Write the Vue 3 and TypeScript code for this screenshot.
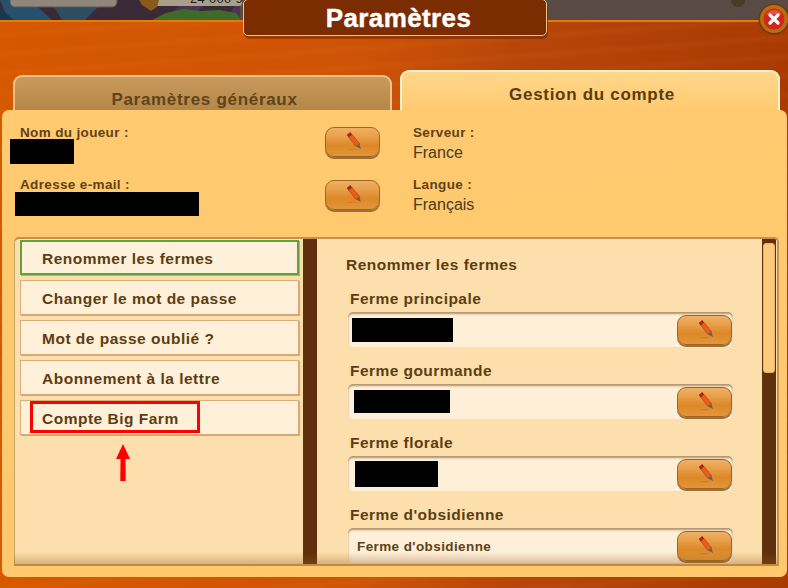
<template>
  <div class="page">
    <div class="backdrop">
      <svg class="scene" width="788" height="20" viewBox="0 0 788 20">
        <rect width="788" height="20" fill="#3a2a38" />
        <path d="M0 0h30l22 20H8z" fill="#27506c" />
        <path d="M0 8l14 12H0z" fill="#173850" />
        <path d="M50 0h55l-20 20H62z" fill="#2f4d62" />
        <path d="M165 20l20-20h24l-20 20zM225 20l14-20h4v20z" fill="#4d3358" />
        <path d="M152 20l14-7 18-4 16 2 20-1 16 3 6 7z" fill="#3f6a2c" />
        <rect x="240" width="548" height="20" fill="#5a4a46" />
        <rect x="10" y="-10" width="107" height="17" rx="5" fill="#8f887a" stroke="#5e574c" />
        <rect x="150" y="-10" width="92" height="16" rx="3" fill="#a9a08c" />
        <path d="M139 0h20l-2 7-6 4-9-6z" fill="#8a5a1c" />
        <circle cx="738" cy="0" r="7" fill="#4a3a22" />
      </svg>
      <span class="scene-count">24 000 92</span>
    </div>

    <div class="wood">
      <div class="tabs">
        <div class="tab tab-off">Paramètres généraux</div>
        <div class="tab tab-on">Gestion du compte</div>
      </div>

      <div class="panel">
        <div class="account">
          <div v-for="row in accountRows" :key="row.label" class="account-row">
            <div class="account-main">
              <div class="caption">{{ row.label }}</div>
              <div class="redacted" :style="{ width: row.maskWidth + 'px', height: row.maskHeight + 'px', marginLeft: row.maskLeft + 'px' }"></div>
            </div>
            <button class="edit-btn" type="button">
              <svg width="55" height="30" viewBox="0 0 55 30">
                <path d="M23 22.500h9" stroke="#f0701c" stroke-width="1" />
                <path d="M27.150 7.400l7.400 9.400-3.500 2.800-7.400-9.400z" fill="#ee5a1a" stroke="#8a3a14" stroke-width=".5" />
                <path d="M25.250 5.100l1.900 2.300-3.500 2.800-1.900-2.300z" fill="#a3261a" />
                <path d="M34.550 16.800l1.350 5.300-4.850-2.500z" fill="#67635a" />
              </svg>
            </button>
            <div class="account-side">
              <div class="caption">{{ row.sideLabel }}</div>
              <div class="side-value">{{ row.sideValue }}</div>
            </div>
          </div>
        </div>

        <div class="sheet">
          <ul class="menu">
            <li v-for="(item, i) in menuItems" :key="item" class="menu-item" :class="{ active: i === 0 }">{{ item }}</li>
          </ul>
          <div class="divider"></div>
          <div class="farms">
            <h2 class="farms-title">Renommer les fermes</h2>
            <div v-for="farm in farms" :key="farm.name" class="farm">
              <div class="farm-label">{{ farm.name }}</div>
              <div class="farm-field">
                <div
                  v-if="farm.maskWidth"
                  class="redacted"
                  :style="{ width: farm.maskWidth + 'px', height: farm.maskHeight + 'px', marginLeft: farm.maskLeft + 'px' }"
                ></div>
                <span v-else class="farm-value">{{ farm.name }}</span>
                <button class="edit-btn field-btn" type="button">
                  <svg width="55" height="30" viewBox="0 0 55 30">
                    <path d="M23 22.500h9" stroke="#f0701c" stroke-width="1" />
                    <path d="M27.150 7.400l7.400 9.400-3.500 2.800-7.400-9.400z" fill="#ee5a1a" stroke="#8a3a14" stroke-width=".5" />
                    <path d="M25.250 5.100l1.900 2.300-3.500 2.800-1.900-2.300z" fill="#a3261a" />
                    <path d="M34.550 16.800l1.350 5.300-4.850-2.500z" fill="#67635a" />
                  </svg>
                </button>
              </div>
            </div>
          </div>
          <div class="scrollbar"><div class="scroll-thumb"></div></div>
          <div class="sheet-fade"></div>
        </div>
      </div>
    </div>

    <div class="title">Paramètres</div>

    <svg class="close" width="34" height="34" viewBox="0 0 34 34">
      <circle cx="17" cy="17" r="15.500" fill="#6e3a0c" />
      <circle cx="17" cy="17" r="14" fill="#b96c10" />
      <circle cx="17" cy="17" r="10.500" fill="#d2261a" />
      <path d="M9 12.500a9.500 9.500 0 0 1 16 0z" fill="#ea5240" />
      <path d="M13 13l8 8M21 13l-8 8" stroke="#fff" stroke-width="3.200" stroke-linecap="round" />
    </svg>

    <div class="callout"></div>
    <svg class="arrow" width="16" height="38" viewBox="0 0 16 38">
      <path d="M8 0l7 15H10.500l.2 22H5.300l.2-22H1z" fill="#f00" />
    </svg>
  </div>
</template>

<script setup lang="ts">
interface AccountRow {
  label: string
  maskWidth: number
  maskHeight: number
  maskLeft: number
  sideLabel: string
  sideValue: string
}

interface Farm {
  name: string
  maskWidth?: number
  maskHeight?: number
  maskLeft?: number
}

const accountRows: AccountRow[] = [
  { label: 'Nom du joueur :', maskWidth: 64, maskHeight: 25, maskLeft: 8, sideLabel: 'Serveur :', sideValue: 'France' },
  { label: 'Adresse e-mail :', maskWidth: 184, maskHeight: 24, maskLeft: 13, sideLabel: 'Langue :', sideValue: 'Français' }
]

const menuItems = [
  'Renommer les fermes',
  'Changer le mot de passe',
  'Mot de passe oublié ?',
  'Abonnement à la lettre',
  'Compte Big Farm'
]

const farms: Farm[] = [
  { name: 'Ferme principale', maskWidth: 101, maskHeight: 24, maskLeft: 4 },
  { name: 'Ferme gourmande', maskWidth: 96, maskHeight: 23, maskLeft: 6 },
  { name: 'Ferme florale', maskWidth: 83, maskHeight: 26, maskLeft: 7 },
  { name: "Ferme d'obsidienne" }
]
</script>

<style>
html,
body {
  margin: 0;
  background: #3a2a38;
}
</style>

<style scoped>
.page {
  position: relative;
  width: 788px;
  height: 588px;
  overflow: hidden;
  font-family: 'Liberation Sans', Arial, sans-serif;
  color: #5a3a0c;
}

.backdrop {
  position: relative;
  height: 20px;
  overflow: hidden;
}

.scene {
  display: block;
}

.scene-count {
  position: absolute;
  left: 190px;
  top: -9px;
  font-size: 13px;
  letter-spacing: 0.3px;
  color: #1c1a14;
}

.wood {
  height: 568px;
  box-sizing: border-box;
  padding-top: 48px;
  border-top: 2px solid #e47c00;
  background:
    repeating-linear-gradient(176deg, rgba(255, 170, 70, 0) 0 9px, rgba(255, 170, 70, 0.05) 13px, rgba(255, 170, 70, 0) 19px),
    linear-gradient(90deg, #d65800 0%, #cf5306 45%, #b8460a 65%, #a93a02 100%);
}

.tabs {
  display: flex;
  align-items: flex-end;
  gap: 8px;
  padding-left: 13px;
  height: 40px;
}

.tab {
  box-sizing: border-box;
  text-align: center;
  font-size: 17px;
  font-weight: 700;
  letter-spacing: 0.7px;
  padding-left: 4px;
  border-radius: 9px 9px 0 0;
  border-style: solid;
  border-width: 2px 2px 0;
}

.tab-off {
  width: 379px;
  height: 35px;
  padding-top: 13px;
  color: #5f4418;
  border-color: #e6c48c;
  background: linear-gradient(180deg, #c99a5c, #b58748);
}

.tab-on {
  width: 380px;
  height: 40px;
  padding-top: 13px;
  color: #593d10;
  border-color: #fff0d0;
  background: linear-gradient(180deg, #ffd68a, #ffcb72);
}

.panel {
  box-sizing: border-box;
  width: 785px;
  height: 467px;
  margin-left: 2px;
  padding: 15px 9px 8px 12px;
  border-radius: 7px;
  background: linear-gradient(170deg, #ffca70, #ffc86c);
}

.account {
  height: 112px;
  margin-left: -12px;
}

.account-row {
  display: flex;
  align-items: flex-start;
  height: 52px;
}

.account-main {
  width: 323px;
  padding-top: 1px;
}

.account-main .caption {
  margin-left: 18px;
}

.caption {
  font-size: 13.500px;
  font-weight: 700;
  line-height: 14px;
  letter-spacing: 0.35px;
  color: #5f4216;
}

.redacted {
  background: #000;
  flex: none;
}

.account-main .redacted {
  margin-top: -1px;
}

.account-row:nth-child(2) .redacted {
  margin-top: 0;
}

.edit-btn {
  display: block;
  width: 55px;
  height: 30px;
  flex: none;
  padding: 0;
  margin: 2px 0 0;
  box-sizing: border-box;
  border: 1px solid #a0661f;
  border-radius: 9px;
  overflow: hidden;
  background: linear-gradient(180deg, #f0b064 0%, #e8a04a 30%, #dc8828 62%, #e39538 100%);
  box-shadow: 0 2px 0 #9c7038;
}

.account-row:nth-child(2) > .edit-btn {
  margin-top: 3px;
}

.edit-btn svg {
  display: block;
  margin: -1px;
}

.account-side {
  margin-left: 33px;
  padding-top: 1px;
}

.side-value {
  margin-top: 4px;
  font-size: 16px;
  line-height: 17px;
  color: #4c3a1c;
}

.sheet {
  position: relative;
  display: flex;
  box-sizing: border-box;
  width: 765px;
  height: 329px;
  overflow: hidden;
  border-top: 2px solid #c58f4c;
  border-right: 2px solid #c58f4c;
  border-radius: 5px 5px 0 0;
  background: #fddfae;
  box-shadow: inset 1px 0 0 #c9a06a;
}

.menu {
  width: 289px;
  flex: none;
  box-sizing: border-box;
  margin: 0;
  padding: 1px 4px 0 6px;
  list-style: none;
  display: flex;
  flex-direction: column;
  gap: 5px;
}

.menu-item {
  box-sizing: border-box;
  height: 35px;
  padding-left: 21px;
  border: 1px solid #d9ad78;
  box-shadow: 1px 1px 0 #cba87a;
  background: #fff0da;
  font-size: 15.500px;
  line-height: 35px;
  font-weight: 700;
  letter-spacing: 0.5px;
  color: #5c3e12;
}

.menu-item.active {
  border: 2px solid #5da53a;
  line-height: 33px;
  padding-left: 20px;
}

.divider {
  width: 14px;
  flex: none;
  background: #5e300b;
}

.farms {
  width: 445px;
  flex: none;
  box-sizing: border-box;
  padding: 17px 0 0 29px;
}

.farms-title {
  margin: 0 0 17px;
  font-size: 15.500px;
  line-height: 17px;
  font-weight: 700;
  letter-spacing: 0.5px;
  color: #5c3e12;
}

.farm {
  height: 72px;
  padding-top: 8px;
  box-sizing: border-box;
}

.farm:first-of-type {
  height: 64px;
  padding-top: 0;
}

.farm-label {
  margin-left: 4px;
  font-size: 15.500px;
  line-height: 18px;
  font-weight: 700;
  letter-spacing: 0.45px;
  color: #5c3e12;
}

.farm-field {
  display: flex;
  align-items: center;
  box-sizing: border-box;
  width: 385px;
  height: 35px;
  margin: 4px 0 0 2px;
  border-radius: 5px;
  background: #fdefd8;
  box-shadow: inset 0 2px 2px rgba(140, 100, 50, 0.65);
}

.farm-value {
  margin-left: 9px;
  padding-top: 2px;
  font-size: 13.500px;
  font-weight: 700;
  letter-spacing: 0.4px;
  color: #5f4216;
}

.field-btn {
  margin: 0 1px 0 auto;
}

.scrollbar {
  width: 14px;
  flex: none;
  box-sizing: border-box;
  padding: 4px 1px 0 1px;
  background: #5e300b;
}

.scroll-thumb {
  height: 130px;
  border-radius: 3px;
  background: #ffc97c;
  border: 1px solid #eab06a;
  box-sizing: border-box;
}

.sheet-fade {
  position: absolute;
  left: 0;
  right: 0;
  bottom: 0;
  height: 14px;
  background: linear-gradient(180deg, rgba(150, 90, 30, 0), rgba(150, 90, 30, 0.35));
  border-bottom: 2px solid #bc8a4a;
  box-sizing: border-box;
}

.title {
  position: absolute;
  left: 243px;
  top: -1px;
  width: 304px;
  height: 37px;
  box-sizing: border-box;
  padding-left: 7px;
  border: 1px solid #f0c484;
  border-radius: 5px;
  background: #7b2c00;
  box-shadow: 1px 3px 0 rgba(90, 30, 0, 0.45);
  text-align: center;
  color: #fff;
  font-size: 26px;
  line-height: 37px;
  font-weight: 700;
  letter-spacing: 0.4px;
  -webkit-text-stroke: 0.4px #fff;
}

.close {
  position: absolute;
  left: 757px;
  top: 2px;
}

.callout {
  position: absolute;
  left: 30px;
  top: 401px;
  width: 170px;
  height: 32px;
  box-sizing: border-box;
  border: 3px solid #f00;
}

.arrow {
  position: absolute;
  left: 115px;
  top: 444px;
}
</style>
